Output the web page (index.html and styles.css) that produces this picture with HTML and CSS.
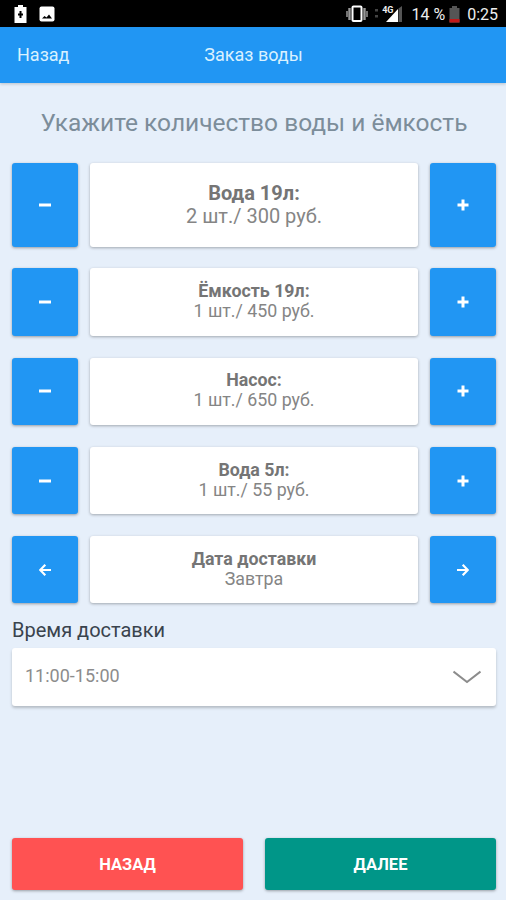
FILE: index.html
```html
<!DOCTYPE html>
<html lang="ru">
<head>
    <meta charset="UTF-8">
    <meta name="viewport" content="width=device-width, initial-scale=1.0">
    <title>Заказ воды</title>
    <link rel="stylesheet" href="styles.css">
</head>
<body>

    <!-- Строка состояния -->
    <div class="status-bar">
        <svg class="status-charge" width="13" height="18" viewBox="0 0 13 18">
            <path d="M4 0h5v2h3.500v16H.5V2H4z" fill="#fff"/>
            <path d="M6.500 6v7M4 9.500h5" stroke="#000" stroke-width="2"/>
        </svg>
        <svg class="status-image" width="16" height="16" viewBox="0 0 16 16">
            <rect x=".5" y=".5" width="15" height="15" rx="2" fill="#fff"/>
            <path d="M3 12.500l2.500-2.500 2 1.500 2.500-3 3 4z" fill="#000"/>
        </svg>
        <svg class="status-vibrate" width="22" height="18" viewBox="0 0 22 18">
            <rect x="6.500" y="1.500" width="9" height="14.500" rx="1" fill="none" stroke="#fff" stroke-width="2"/>
            <path d="M3.500 3v12M18.500 3v12" stroke="#999" stroke-width="2.400"/>
            <path d="M1 6v6M21 6v6" stroke="#999" stroke-width="1.500"/>
        </svg>
        <svg class="status-dots" width="3" height="10" viewBox="0 0 3 10">
            <path d="M0 0h3v2.500H0zM0 6h3v2.500H0z" fill="#444"/>
        </svg>
        <div class="status-signal">
            <span class="network">4G</span>
            <svg width="17" height="17" viewBox="0 0 17 17">
                <path d="M0 16L12 3v13z" fill="#fff"/>
                <path d="M12.500 2.500L16 0v16h-3.500z" fill="#555"/>
            </svg>
        </div>
        <span class="status-percent">14 %</span>
        <svg class="status-battery" width="11" height="17" viewBox="0 0 11 17">
            <path d="M3 0h5v2h2.500v14.500H.5V2H3z" fill="#555"/>
            <path d="M.5 13h10v3.500H.5z" fill="#c01818"/>
        </svg>
        <span class="status-time">0:25</span>
    </div>

    <header class="header">
        <a class="header-back">Назад</a>
        <div class="header-title">Заказ воды</div>
    </header>

    <main class="container">
        <h1>Укажите количество воды и ёмкость</h1>

        <div class="order-list">
            <div class="order-row order-row-main">
                <button class="step-button"><svg width="12" height="12" viewBox="0 0 12 12"><path d="M0 6h12"/></svg></button>
                <div class="card"><b>Вода 19л:</b><span>2 шт./ 300 руб.</span></div>
                <button class="step-button"><svg width="12" height="12" viewBox="0 0 12 12"><path d="M.5 6h11M6 .5v11"/></svg></button>
            </div>
            <div class="order-row">
                <button class="step-button"><svg width="12" height="12" viewBox="0 0 12 12"><path d="M0 6h12"/></svg></button>
                <div class="card"><b>Ёмкость 19л:</b><span>1 шт./ 450 руб.</span></div>
                <button class="step-button"><svg width="12" height="12" viewBox="0 0 12 12"><path d="M.5 6h11M6 .5v11"/></svg></button>
            </div>
            <div class="order-row">
                <button class="step-button"><svg width="12" height="12" viewBox="0 0 12 12"><path d="M0 6h12"/></svg></button>
                <div class="card"><b>Насос:</b><span>1 шт./ 650 руб.</span></div>
                <button class="step-button"><svg width="12" height="12" viewBox="0 0 12 12"><path d="M.5 6h11M6 .5v11"/></svg></button>
            </div>
            <div class="order-row">
                <button class="step-button"><svg width="12" height="12" viewBox="0 0 12 12"><path d="M0 6h12"/></svg></button>
                <div class="card"><b>Вода 5л:</b><span>1 шт./ 55 руб.</span></div>
                <button class="step-button"><svg width="12" height="12" viewBox="0 0 12 12"><path d="M.5 6h11M6 .5v11"/></svg></button>
            </div>
            <div class="order-row">
                <button class="step-button step-arrow"><svg width="12" height="12" viewBox="0 0 12 12"><path d="M12 6H1.500M6.300 .8L1.200 6l5.100 5.200"/></svg></button>
                <div class="card"><b>Дата доставки</b><span>Завтра</span></div>
                <button class="step-button step-arrow"><svg width="12" height="12" viewBox="0 0 12 12"><path d="M0 6h10.500M5.700 .8L10.800 6l-5.100 5.200"/></svg></button>
            </div>
        </div>

        <div class="time-label">Время доставки</div>
        <div class="time-select">
            <span>11:00-15:00</span>
            <svg width="28" height="14" viewBox="0 0 28 14">
                <path d="M.5 1.500L14 12 27.500 1.500" fill="none" stroke="#8c8c8c" stroke-width="2"/>
            </svg>
        </div>

        <div class="actions">
            <button class="action-button action-back">НАЗАД</button>
            <button class="action-button action-next">ДАЛЕЕ</button>
        </div>
    </main>

</body>
</html>
```
FILE: styles.css
```css
* {
    box-sizing: border-box;
}
body {
    display: flex;
    flex-direction: column;
    height: 900px;
    margin: 0;
    font-family: Roboto, "Liberation Sans", sans-serif;
    background-color: #e6effa;
    overflow: hidden;
}
svg {
    display: block;
    flex: none;
}
.status-bar {
    display: flex;
    align-items: center;
    flex: none;
    height: 27px;
    padding: 1px 8px 0 14px;
    background-color: #000;
    color: #eee;
    font-size: 16px;
    white-space: nowrap;
}
.status-image {
    margin-left: 12px;
}
.status-vibrate {
    margin-left: auto;
}
.status-dots {
    margin-left: 7px;
}
.status-signal {
    display: flex;
    align-items: flex-end;
    margin-left: 4px;
}
.network {
    align-self: flex-start;
    margin-right: -7px;
    font-size: 9px;
    font-weight: bold;
    line-height: 8px;
}
.status-percent {
    margin-left: 8px;
}
.status-battery {
    margin-left: 4px;
}
.status-time {
    margin-left: 7px;
}
.header {
    display: grid;
    grid-template-columns: 1fr auto 1fr;
    align-items: center;
    flex: none;
    height: 56px;
    padding: 0 16px 2px 17px;
    background-color: #2196f3;
    color: #d9f1ff;
    font-size: 18px;
    box-shadow: 0 1px 3px rgba(0, 0, 0, 0.2);
}
.container {
    display: flex;
    flex: 1;
    flex-direction: column;
    padding: 0 10px 10px 12px;
}
h1 {
    margin: 24px 0 25px;
    color: #7c8d9a;
    font-size: 24.5px;
    font-weight: normal;
    line-height: 31px;
    text-align: center;
    white-space: nowrap;
}
.order-list {
    display: flex;
    flex-direction: column;
    gap: 21.7px;
}
.order-row {
    display: grid;
    grid-template-columns: 66px 1fr 66px;
    gap: 12px;
    height: 67.5px;
    font-size: 17.8px;
    line-height: 20px;
}
.order-row-main {
    height: 83.7px;
    font-size: 20px;
    line-height: 23px;
}
.step-button {
    display: flex;
    align-items: center;
    justify-content: center;
    padding: 0;
    border: none;
    border-radius: 3px;
    background-color: #2196f3;
    box-shadow: 0 1px 3px rgba(0, 0, 0, 0.35);
}
.step-button path {
    fill: none;
    stroke: #fff;
    stroke-width: 3;
}
.step-arrow path {
    stroke-width: 2.2;
}
.card {
    display: flex;
    flex-direction: column;
    align-items: center;
    justify-content: center;
    padding-bottom: 2px;
    border-radius: 3px;
    background-color: #fff;
    color: #858585;
    box-shadow: 0 1px 3px rgba(0, 0, 0, 0.3);
}
.order-row-main .card {
    padding-bottom: 0;
}
.card b {
    color: #757575;
}
.time-label {
    margin-top: 16px;
    color: #39434d;
    font-size: 20px;
    line-height: 22px;
}
.time-select {
    display: flex;
    align-items: center;
    justify-content: space-between;
    height: 58px;
    margin-top: 7px;
    padding: 0 15px 0 13px;
    border-radius: 3px;
    background-color: #fff;
    color: #8c8c8c;
    font-size: 18px;
    box-shadow: 0 2px 3px rgba(0, 0, 0, 0.22);
}
.time-select span {
    padding-bottom: 3px;
}
.actions {
    display: grid;
    grid-template-columns: 1fr 1fr;
    gap: 22px;
    margin-top: auto;
}
.action-button {
    height: 52px;
    border: none;
    border-radius: 3px;
    color: #fff;
    font-family: inherit;
    font-size: 16.5px;
    font-weight: bold;
    box-shadow: 0 1px 3px rgba(0, 0, 0, 0.35);
}
.action-back {
    background-color: #ff5252;
}
.action-next {
    background-color: #009688;
}
```
